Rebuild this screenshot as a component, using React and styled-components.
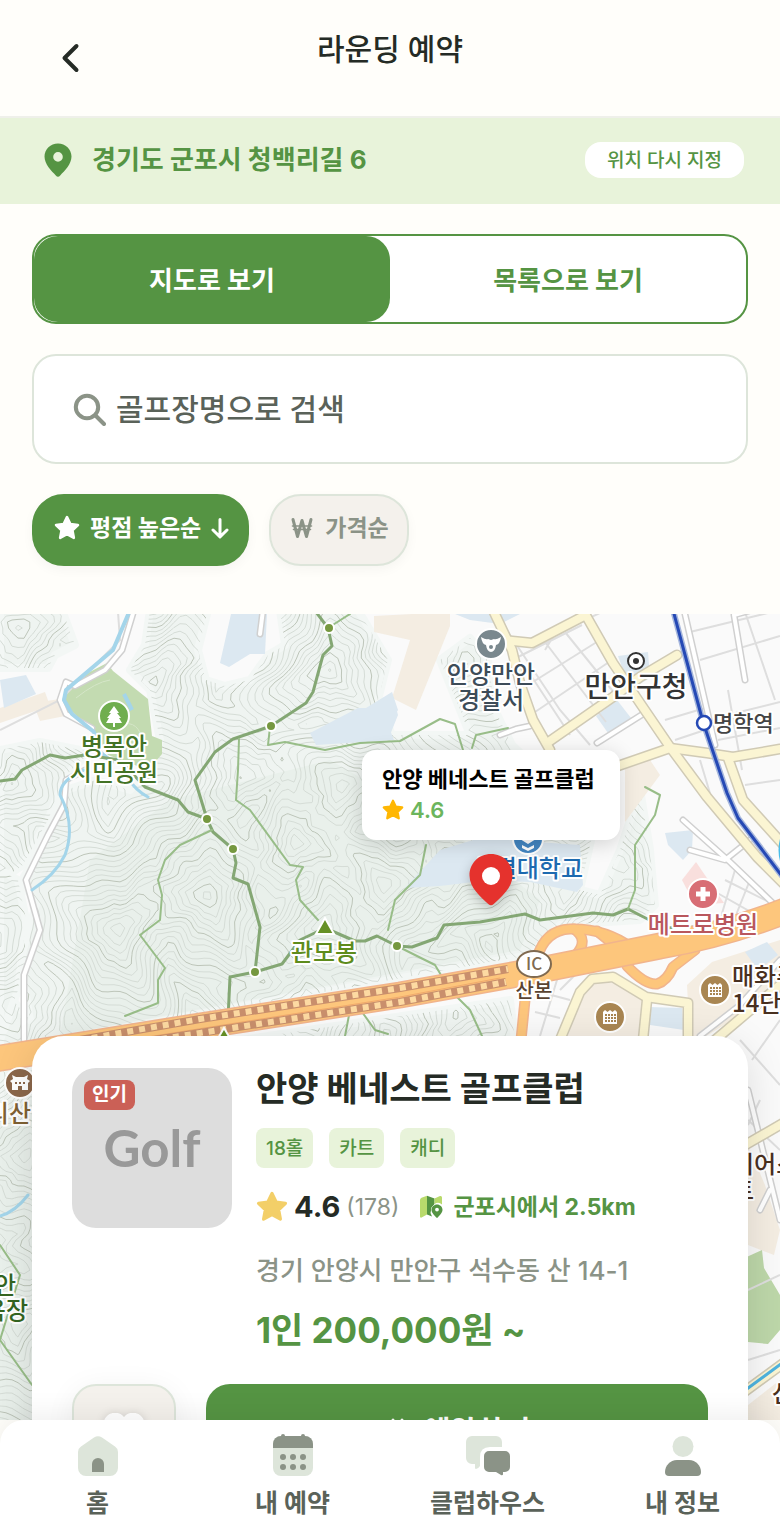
import React from 'react';
import styled, { createGlobalStyle, css } from 'styled-components';

const color = {
  page: '#fffefa',
  green: '#559443',
  mint: '#e8f3da',
  line: '#dde5da',
  sand: '#f4f1ec',
  ink: '#252b25',
  slate: '#5a6259',
  sage: '#8b9387',
};

const GlobalStyle = createGlobalStyle`
  *, *::before, *::after { box-sizing: border-box; }
  body { margin: 0; background: ${color.page}; }
  body, button, input {
    font-family: Inter, "Noto Sans CJK KR", sans-serif;
    color: ${color.ink};
  }
  button { border: 0; background: none; padding: 0; cursor: pointer; }
  p, h1, h2, ul { margin: 0; padding: 0; }
  svg { display: block; flex: none; }
`;

const Screen = styled.div`
  display: flex;
  flex-direction: column;
  height: 100vh;
  min-height: 900px;
  overflow: hidden;
`;

/* ---------- header ---------- */

const Header = styled.header`
  display: grid;
  grid-template-columns: 1fr auto 1fr;
  height: 118px;
  flex: none;
  padding: 0 32px;
  border-bottom: 2px solid #eff0ea;
`;

const BackButton = styled.button`
  display: grid;
  place-items: center;
  width: 76px;
  height: 116px;
`;

const PageTitle = styled.h1`
  padding-top: 26px;
  font-size: 30px;
  line-height: 46px;
  font-weight: 500;
`;

const LocationBar = styled.div`
  display: flex;
  align-items: center;
  flex: none;
  height: 86px;
  padding: 0 36px 2px 44px;
  background: ${color.mint};
`;

const LocationText = styled.p`
  flex: 1;
  margin-left: 20px;
  font-size: 26px;
  line-height: 42px;
  font-weight: 700;
  color: ${color.green};
`;

const RelocateButton = styled.button`
  height: 36px;
  padding: 0 22px;
  border-radius: 16px;
  background: #fff;
  color: ${color.green};
  font-size: 19px;
  line-height: 38px;
  font-weight: 500;
`;

/* ---------- controls ---------- */

const Controls = styled.section`
  display: flex;
  flex-direction: column;
  flex: none;
  gap: 30px;
  padding: 30px 32px 48px;
`;

const ViewSwitch = styled.div`
  display: flex;
  height: 90px;
  border: 2px solid ${color.green};
  border-radius: 24px;
  background: #fff;
`;

const ViewButton = styled.button`
  flex: 1;
  padding-top: 4px;
  border-radius: 24px;
  font-size: 26px;
  line-height: 40px;
  font-weight: 700;
  color: ${(p) => (p.$on ? '#fff' : color.green)};
  background: ${(p) => (p.$on ? color.green : 'transparent')};
`;

const SearchBox = styled.label`
  display: flex;
  align-items: center;
  gap: 10px;
  height: 110px;
  padding: 0 38px;
  border: 2px solid ${color.line};
  border-radius: 24px;
  background: #fff;
`;

const SearchInput = styled.input`
  flex: 1;
  min-width: 0;
  height: 60px;
  padding: 0;
  border: 0;
  outline: 0;
  background: none;
  font-size: 30px;
  font-weight: 500;
  &::placeholder { color: ${color.slate}; opacity: 1; }
`;

const ChipRow = styled.div`
  display: flex;
  gap: 20px;
`;

const Chip = styled.button`
  display: flex;
  align-items: center;
  gap: 10px;
  height: 72px;
  padding: 0 18px 4px 20px;
  border: 2px solid ${(p) => (p.$on ? color.green : color.line)};
  border-radius: 32px;
  font-size: 23px;
  line-height: 32px;
  font-weight: 700;
  box-shadow: 0 4px 12px rgba(0, 0, 0, 0.04);
  ${(p) => p.$on
    ? css`background: ${color.green}; color: #fff;`
    : css`background: ${color.sand}; color: ${color.sage};`}
`;

/* ---------- map ---------- */

const MapArea = styled.main`
  position: relative;
  flex: 1;
  min-height: 0;
  overflow: hidden;
  background: #fafafa;
`;

const MapDrawing = styled.svg`
  width: 100%;
  height: 100%;
`;

const Marker = styled.div`
  position: absolute;
  top: 136px;
  left: calc(50% + 101px);
  display: flex;
  flex-direction: column;
  align-items: center;
  gap: 14px;
  width: 258px;
  margin-left: -129px;
`;

const Popup = styled.div`
  width: 100%;
  height: 90px;
  padding: 12px 0 0 20px;
  border-radius: 14px;
  background: #fff;
  box-shadow: 0 4px 20px rgba(0, 0, 0, 0.16);
  white-space: nowrap;
`;

const PopupTitle = styled.p`
  font-size: 22px;
  line-height: 34px;
  font-weight: 700;
  color: #000;
`;

const PopupScore = styled.p`
  display: flex;
  align-items: center;
  gap: 6px;
  font-size: 22px;
  line-height: 28px;
  font-weight: 600;
  color: #6cb55d;
`;

/* ---------- course card ---------- */

const Card = styled.article`
  position: absolute;
  top: 422px;
  left: 32px;
  right: 32px;
  padding: 32px 40px;
  border-radius: 32px;
  background: #fff;
  box-shadow: 0 8px 40px rgba(0, 0, 0, 0.12);
`;

const CardBody = styled.div`
  display: flex;
  gap: 24px;
`;

const Thumb = styled.div`
  position: relative;
  display: grid;
  place-items: center;
  flex: none;
  width: 160px;
  height: 160px;
  border-radius: 24px;
  background: #ddd;
  color: #999;
  font-family: Lato, sans-serif;
  font-size: 51px;
  line-height: 60px;
  font-weight: 700;
`;

const HotBadge = styled.span`
  position: absolute;
  top: 12px;
  left: 12px;
  height: 30px;
  padding: 0 8px;
  border-radius: 8px;
  background: #cb6056;
  color: #fff;
  font-family: Inter, "Noto Sans CJK KR", sans-serif;
  font-size: 19px;
  line-height: 30px;
  font-weight: 700;
`;

const Info = styled.div`
  flex: 1;
  min-width: 0;
`;

const CourseName = styled.h2`
  font-size: 34px;
  line-height: 42px;
  font-weight: 700;
`;

const TagRow = styled.ul`
  display: flex;
  gap: 16px;
  margin-top: 18px;
  list-style: none;
`;

const Tag = styled.li`
  height: 40px;
  padding: 0 10px;
  border-radius: 8px;
  background: ${color.mint};
  color: ${color.green};
  font-size: 19px;
  line-height: 42px;
  font-weight: 500;
`;

const ScoreRow = styled.div`
  display: flex;
  align-items: center;
  height: 34px;
  margin-top: 22px;
  line-height: 34px;
`;

const Score = styled.strong`
  margin: 0 6px;
  font-size: 29px;
  font-weight: 700;
`;

const Reviews = styled.span`
  margin-right: 20px;
  font-size: 23px;
  color: ${color.sage};
`;

const Distance = styled.span`
  margin-left: 10px;
  font-size: 23px;
  font-weight: 700;
  color: ${color.green};
`;

const Address = styled.p`
  margin-top: 28px;
  font-size: 26px;
  line-height: 38px;
  font-weight: 500;
  color: ${color.sage};
`;

const Price = styled.p`
  margin-top: 18px;
  font-size: 35px;
  line-height: 44px;
  font-weight: 700;
  color: ${color.green};
`;

const Actions = styled.div`
  display: flex;
  gap: 30px;
  margin-top: 32px;
`;

const LikeButton = styled.button`
  display: grid;
  place-items: center;
  flex: none;
  width: 104px;
  height: 96px;
  border: 2px solid ${color.line};
  border-radius: 24px;
  background: ${color.sand};
  box-shadow: 0 4px 30px rgba(0, 0, 0, 0.06);
`;

const BookButton = styled.button`
  display: flex;
  align-items: center;
  justify-content: center;
  gap: 12px;
  flex: 1;
  height: 96px;
  border-radius: 24px;
  background: ${color.green};
  color: #fff;
  font-size: 29px;
  line-height: 40px;
  font-weight: 700;
`;

/* ---------- tab bar ---------- */

const TabBar = styled.nav`
  position: relative;
  display: grid;
  grid-template-columns: repeat(4, 1fr);
  flex: none;
  height: 112px;
  border-radius: 24px 24px 0 0;
  background: #fff;
  box-shadow: 0 -4px 30px rgba(0, 0, 0, 0.07);
`;

const Tab = styled.a`
  display: flex;
  flex-direction: column;
  align-items: center;
  gap: 8px;
  padding-top: 16px;
  color: ${color.slate};
  font-size: 25px;
  line-height: 38px;
  font-weight: 700;
  text-decoration: none;
`;

/* ---------- icons ---------- */

function Star({ size, fill }) {
  return (
    <svg width={size} height={size} viewBox="0 0 24 24" fill={fill} stroke={fill} strokeWidth="2.4" strokeLinejoin="round">
      <path d="M12 1.9l3.1 6.4 7 .9-5.1 4.9 1.3 7-6.3-3.4-6.3 3.4 1.3-7L1.9 9.2l7-.9z" />
    </svg>
  );
}

const BackIcon = () => (
  <svg width="20" height="30" viewBox="0 0 20 30" fill="none" stroke={color.ink} strokeWidth="4" strokeLinecap="round" strokeLinejoin="round">
    <path d="M16.500 3 4.500 15l12 12" />
  </svg>
);

const PinIcon = () => (
  <svg width="28" height="34" viewBox="0 0 28 34" fill={color.green} fillRule="evenodd">
    <path d="M14 .5C6.500.5.5 6.300.5 13.600c0 7.800 7 14.400 11.300 18.900a3 3 0 0 0 4.400 0C20.500 28 27.500 21.400 27.500 13.600 27.500 6.300 21.500.5 14 .5zm0 18.200a4.800 4.800 0 1 1 0-9.600 4.800 4.800 0 0 1 0 9.600z" />
  </svg>
);

const SearchIcon = () => (
  <svg width="34" height="34" viewBox="0 0 34 34" fill="none" stroke={color.sage} strokeWidth="4" strokeLinecap="round">
    <circle cx="15" cy="15" r="11.200" />
    <path d="M23.500 23.500l8.500 8.500" />
  </svg>
);

const ArrowDown = () => (
  <svg width="18" height="22" viewBox="1 0 18 22" fill="none" stroke="#fff" strokeWidth="3" strokeLinecap="round" strokeLinejoin="round">
    <path d="M10 2.500v17M3 13l7 6.800 7-6.800" />
  </svg>
);

const WonIcon = () => (
  <svg width="24" height="22" viewBox="1 0 24 22" fill="none" stroke={color.sage} strokeWidth="3" strokeLinecap="round" strokeLinejoin="round">
    <path d="M3 2.500 7.500 19.500 12 3.500l4.500 16L21 2.500" />
    <path d="M2.500 9h19M3.500 12.500h17" strokeWidth="1.600" />
  </svg>
);

const MapIcon = () => (
  <svg width="24" height="24" viewBox="0 0 24 24">
    <path d="M1 5q0-1.500 1.500-2.200L8 .8v18.800L2.600 22.500Q1 23 1 21.500z" fill="#b9da6c" />
    <path d="M8 .8 15.500 3.500V9l-3 4-1 5 1.500 3.500L8 19.600z" fill={color.green} />
    <path d="M15.500 3.500 21 1q2-.5 2 1.500v7q-3.500-3-7.500-.5z" fill="#b9da6c" />
    <path fillRule="evenodd" d="M18 9.500c-3 0-5.500 2.300-5.500 5.200 0 3.300 3.200 5.600 4.500 7.500q1 1 2 0c1.300-1.900 4.500-4.200 4.500-7.500 0-2.900-2.500-5.200-5.500-5.200zm0 7a1.900 1.900 0 1 1 0-3.800 1.900 1.900 0 0 1 0 3.800z" fill={color.green} stroke="#fff" strokeWidth="1" paintOrder="stroke" />
  </svg>
);

const HomeIcon = () => (
  <svg width="40" height="40" viewBox="0 0 40 40">
    <path d="M16 1.600a7 7 0 0 1 8 0L37 10.600q3 2.100 3 5.400v16a8 8 0 0 1-8 8H8a8 8 0 0 1-8-8V16q0-3.300 3-5.400z" fill={color.line} />
    <path d="M14 28a6 6 0 0 1 12 0v8H14z" fill={color.sage} />
  </svg>
);

const CalendarIcon = () => (
  <svg width="40" height="40" viewBox="0 0 40 40" overflow="visible">
    <rect width="40" height="40" rx="8" fill={color.line} />
    <g fill={color.sage}>
      <path d="M0 12V8a8 8 0 0 1 8-8h24a8 8 0 0 1 8 8v4z" />
      <circle cx="10" cy="0" r="2" />
      <circle cx="30" cy="0" r="2" />
      {[21, 31].map((y) => [10, 20, 30].map((x) => <circle key={`${x}-${y}`} cx={x} cy={y} r="3" />))}
    </g>
  </svg>
);

const ChatIcon = () => (
  <svg width="44" height="40" viewBox="0 0 44 40">
    <path d="M6 0h24a6 6 0 0 1 6 6v5H24q-10 0-10 10v9q-2 3-4 3-1 0-1-1.500V28H6a6 6 0 0 1-6-6V6a6 6 0 0 1 6-6z" fill={color.line} />
    <path d="M23 15h16a5 5 0 0 1 5 5v11a5 5 0 0 1-5 5h-2v2.600q-.5 1-2 .4L30 36h-7a5 5 0 0 1-5-5V20a5 5 0 0 1 5-5z" fill={color.sage} />
  </svg>
);

const PersonIcon = () => (
  <svg width="40" height="40" viewBox="0 0 40 40">
    <circle cx="20" cy="10.500" r="10.500" fill={color.line} />
    <path d="M14 24h12c7 0 12 6 12 12q0 4-4 4H6q-4 0-4-4c0-6 5-12 12-12z" fill={color.sage} />
  </svg>
);

const MarkerPin = () => (
  <svg width="44" height="52" viewBox="0 0 44 52" style={{ filter: 'drop-shadow(0 4px 6px rgba(0,0,0,.22))' }}>
    <path d="M22 0C9.600 0 .5 9.400.5 21.500.5 34 12 43 19.500 50.200q2.500 2.300 5 0C32 43 43.500 34 43.500 21.500 43.500 9.400 34.400 0 22 0z" fill="#e5322d" />
    <circle cx="22" cy="22" r="9" fill="#fff" />
  </svg>
);

/* ---------- terrain ---------- */

const peaks = [
  [15, 632, 190], [157, 682, 215], [240, 640, 120], [330, 676, 225], [465, 668, 190], [240, 770, 215],
  [340, 790, 235], [120, 925, 240], [202, 898, 250], [325, 930, 245], [300, 845, 235], [450, 860, 220],
  [560, 890, 200], [6, 1008, 200], [20, 1160, 240], [0, 870, 190], [10, 785, 200], [450, 1020, 215],
  [380, 880, 235], [20, 1330, 230], [300, 1010, 230], [620, 870, 170], [60, 1240, 210],
];

function elevation(x, y) {
  const wx = x + 5 * Math.sin(y / 21) + 1.5 * Math.sin((x + y) / 9);
  const wy = y + 5 * Math.sin(x / 23) + 1.5 * Math.sin((x - y) / 10);
  let best = -999;
  peaks.forEach(([px, py, h], i) => {
    const dx = wx - px;
    const dy = wy - py;
    const a = Math.atan2(dy, dx);
    const stretch = 1 + 0.2 * Math.sin(3 * a + i) + 0.09 * Math.sin(8 * a + i * 2);
    best = Math.max(best, h - Math.sqrt(dx * dx + dy * dy) * stretch);
  });
  return best;
}

function traceContours() {
  const cell = 6;
  const interval = 6;
  const out = { minor: '', major: '' };
  const cols = 114;
  const rows = 136;
  const grid = [];
  for (let r = 0; r <= rows; r += 1) {
    grid.push([]);
    for (let c = 0; c <= cols; c += 1) grid[r].push(elevation(c * cell, 610 + r * cell));
  }
  for (let r = 0; r < rows; r += 1) {
    for (let c = 0; c < cols; c += 1) {
      const v = [grid[r][c], grid[r][c + 1], grid[r + 1][c + 1], grid[r + 1][c]];
      const corner = [[0, 0], [1, 0], [1, 1], [0, 1]];
      const lo = Math.ceil(Math.min(...v) / interval);
      const hi = Math.floor(Math.max(...v) / interval);
      for (let n = lo; n <= hi; n += 1) {
        const level = n * interval;
        const hits = [];
        for (let k = 0; k < 4; k += 1) {
          const a = v[k];
          const b = v[(k + 1) % 4];
          if (a < level !== b < level) {
            const t = (level - a) / (b - a);
            const p = corner[k];
            const q = corner[(k + 1) % 4];
            hits.push([(c + p[0] + (q[0] - p[0]) * t) * cell, 610 + (r + p[1] + (q[1] - p[1]) * t) * cell]);
          }
        }
        const key = n % 5 === 0 ? 'major' : 'minor';
        for (let k = 0; k + 1 < hits.length; k += 2) {
          out[key] += `M${hits[k].map((m) => m.toFixed(1)).join(' ')}L${hits[k + 1].map((m) => m.toFixed(1)).join(' ')}`;
        }
      }
    }
  }
  return out;
}

const contours = traceContours();

const hills = [
  'M0 610H62L75 645 55 655 48 668 0 668z',
  'M150 610H208L198 650 206 680 225 686 250 680 268 655 285 645 280 610H358L376 640 388 660 378 700 392 735 470 735 452 690 440 660 470 638 488 660 495 710 512 745 560 790 600 800 580 890 600 895 620 850 640 790 650 850 655 905 640 920 560 925 530 955 0 1050V985L30 1020 20 960 36 905 22 880 46 840 66 790 96 780 130 790 150 770 160 740 150 690 130 670 145 645z',
  'M0 750L40 742 90 752 66 775 48 820 22 866 0 880z',
  'M0 870L18 880 26 920 18 990 0 1040z',
  'M0 1072L200 1046 510 1000 515 1040 500 1420H0z',
];

/* All outlines go down before any fill, so that crossings stay open. */
function Roads({ list, width = 8, fill = '#fbf5d3', edge = '#d0cab5' }) {
  return (
    <>
      {list.map((d) => <path key={`edge ${d}`} d={d} stroke={edge} strokeWidth={width + 3} />)}
      {list.map((d) => <path key={`fill ${d}`} d={d} stroke={fill} strokeWidth={width} />)}
    </>
  );
}

const MapLabel = styled.text`
  font-family: "Noto Sans CJK KR", sans-serif;
  font-size: ${(p) => p.$size || 24}px;
  font-weight: 500;
  fill: ${(p) => p.$fill};
  stroke: #fff;
  stroke-width: 4px;
  stroke-linejoin: round;
  paint-order: stroke;
  text-anchor: ${(p) => p.$anchor || 'middle'};
`;

const Building = ({ x, y }) => (
  <g>
    <circle cx={x} cy={y} r="15" fill="#a98652" stroke="#fff" strokeWidth="2" />
    <path d={`M${x - 7} ${y + 7}v-12l2-2 2.500 2 2.500-2 2.500 2 2.500-2 2 2v12z`} fill="#fff" />
    {[-3, 0, 3].map((dy) => [-5, -2, 1, 4].map((dx) => (
      <rect key={`${dx}${dy}`} x={x + dx} y={y + dy} width="2" height="2" fill="#a98652" />
    )))}
  </g>
);

const highway = 'M-5 1059L200 1026 400 995 540 970 660 946Q725 935 790 909';

function CourseMap() {
  return (
    <MapDrawing viewBox="0 614 780 806" preserveAspectRatio="xMidYMin slice" role="img" aria-label="지도">
      <defs>
        <clipPath id="hills">{hills.map((d) => <path key={d} d={d} />)}</clipPath>
      </defs>
      <rect y="610" width="780" height="812" fill="#fafafa" />

      <g fill="#eff4f1" stroke="#f3f7f5" strokeWidth="8" strokeLinejoin="round">
        {hills.map((d) => <path key={d} d={d} />)}
      </g>
      <g clipPath="url(#hills)" fill="none">
        <path d="M170 800L330 760 450 830 540 900 520 950 60 1035 90 860zM0 1100H60V1420H0z" fill="#e9f0eb" />
        <path d={contours.minor} stroke="#d5dcd6" strokeWidth="1" />
        <path d={contours.major} stroke="#bdc5b9" strokeWidth="1" />
      </g>

      {/* built-up blocks and water */}
      <g fill="#f4ede2">
        <path d="M0 708L45 692 50 706 0 723z" />
        <path d="M33 703L60 699 65 716 40 721z" />
        <path d="M374 616L450 612 450 626 416 710 392 698 410 640 374 632z" />
        <path d="M625 765L650 760 660 775 625 822z" />
        <path d="M585 990L600 980 640 990 646 1010 640 1040 565 1040z" />
        <path d="M687 985L712 962 780 940V990L700 1040H690z" />
        <path d="M748 1145L765 1185 780 1230 774 1255 748 1245z" />
        <path d="M748 1405L780 1380V1422H748z" />
      </g>
      <g fill="#dce8f1">
        <path d="M231 614H267L265 654 250 654 229 667 220 663z" />
        <path d="M0 680L26 675 36 694 4 708z" />
        <path d="M310 733L358 708 366 708 392 692 398 710 388 725 394 740 316 745z" />
        <path d="M380 700L392 693 398 715 388 740H380z" />
        <path d="M455 614H520L500 624 470 620z" />
        <path d="M618 656L648 652 650 678 630 690z" />
        <path d="M596 716L617 700 631 718 608 733z" />
        <path d="M405 888L440 850 480 838 580 845 583 885 577 892 530 882 490 880 440 886z" />
        <path d="M665 833L693 830 692 850 683 860 668 845z" />
        <path d="M745 952L767 942 778 955 758 970z" />
        <path d="M650 1007L682 1008 684 1030 650 1025z" />
      </g>
      <path d="M682 880L696 862 724 903 695 905z" fill="#f9dfdd" />
      <path d="M64 690L80 677 107 663 113 671 148 699 152 736 162 740V754L148 770 108 755 92 730 66 706z" fill="#c3dbb1" />
      <path d="M70 690Q90 672 105 672M76 698Q96 682 110 680M120 724Q140 720 142 742" stroke="#d5e6c8" fill="none" />
      <path d="M124 694L132 710" stroke="#a4d5ea" strokeWidth="4" />
      <path d="M740 1260L762 1250 764 1268 780 1295V1330L768 1344 748 1342z" fill="#bdd7a9" />

      {/* small streets */}
      <g fill="none" stroke="#dedede" strokeWidth="2">
        <path d="M508 632L560 710 590 745M524 665L570 735M545 642L606 722M565 632L620 700M512 660L582 625M520 690L600 640M535 712L612 660M545 650L560 625M585 620L602 612" />
        <path d="M690 632L780 610M700 660L780 636M715 718L780 702M718 740L780 728M745 612L775 700M728 690L742 770M665 720L705 708M675 740L705 730M700 760L712 800M745 785L780 780" />
        <path d="M0 730L60 700 120 640 118 612M560 970L540 1036M575 975L560 990M540 992L570 1000M535 1012L560 1018M735 870L720 920M750 880L730 930M712 890L765 920M725 880L775 905" />
        <path d="M740 1040L780 1085M748 1120L780 1150M752 1060L780 1020M760 1100L748 1125M748 1290L780 1275M748 1360L780 1350" />
      </g>
      <g strokeLinejoin="round" strokeLinecap="round" fill="none">
        <Roads
          width={4}
          fill="#fff"
          edge="#d0d0d0"
          list={[
            'M134 610L122 650 105 670 75 686 66 682 60 700 66 714 92 728',
            'M263 610L260 634',
            'M85 770L66 780 64 805 48 835 26 880 40 930 24 975 24 1040',
            'M684 610L715 745',
            'M752 610L734 615 745 680',
            'M530 726L516 729 500 735',
            'M597 743L643 714',
            'M683 820L730 862 780 910',
            'M690 850L725 860 750 840',
            'M700 1036L740 1005 780 960',
            'M748 1090L780 1220',
            'M760 1210L770 1190',
          ]}
        />

        <path d="M130 610L113 650 66 690 64 700 72 714 94 732 100 752 112 762" stroke="#a4d5ea" strokeWidth="4" />
        <path d="M84 770Q60 780 60 795Q76 825 65 855Q55 875 32 890M0 1216Q15 1212 28 1195M130 780Q135 790 148 797" stroke="#a4d5ea" strokeWidth="3" />

        {/* hiking trails */}
        <path d="M316 612L328 628 332 646 323 655 313 692 306 703 271 726 233 739 215 752 195 780 207 819 213 832 233 849 236 863 233 878 248 884 260 927 255 972 230 977 228 1019 222 1034M0 781L15 779 22 770 50 755 65 758 85 755 120 760 145 787 178 800 188 812 207 819M255 972L282 964 300 940 325 928 355 941 365 941 377 936 397 946 412 947 437 938 444 925 480 922 525 914 540 920 593 913 613 915 628 909 665 928 730 926" stroke="#84a774" strokeWidth="3" />
        <path d="M328 628L350 614M270 727L268 745 285 742 325 750 360 743 400 741 440 719 455 724 463 750M472 748L476 735 508 728M239 739L238 770 236 800 250 810 290 865 303 867 296 880 300 900 318 920M212 830L180 845 165 860 158 880 162 895 160 920 140 935 165 968 158 980 158 1003 125 1016M426 845L420 875 395 900 388 930M645 787L660 795 655 815 635 845 635 890 628 909M397 946L435 965 450 990 470 1010 482 1036M345 1036L350 1010 362 1012 375 1030 388 1034M0 1245L20 1275 0 1340 32 1385" stroke="#98bd88" strokeWidth="2" />

        {/* main roads */}
        <Roads
          list={[
            'M493 610L512 650 520 683 533 720 550 750',
            'M503 640L532 643 582 617',
            'M547 743L613 697 640 677 677 655',
            'M580 605L613 663 640 703 670 747 707 797 757 857 790 890',
            'M615 767L670 748 707 753 733 757 780 749',
            'M728 758L743 800 790 852',
            'M560 1040L580 992 592 979 613 977 646 997 688 1003V1040',
            'M647 1000L643 1040',
            'M715 1040L780 985',
            'M740 1148L785 1122',
            'M740 1395L785 1362',
          ]}
        />
        <path d="M740 1394L785 1361" stroke="#4db3df" strokeWidth="3" />

        {/* expressway and its ramps */}
        <Roads
          fill="#fdc67c"
          edge="#f1b48c"
          list={[
            'M537 958Q545 930 570 929Q605 928 632 948L680 945',
            'M574 929Q590 940 575 956',
            'M597 931L618 948',
            'M627 966Q645 985 657 984Q667 981 673 967L695 950',
            'M527 980L521 1040',
          ]}
        />
        <Roads list={[highway]} width={24} fill="#fdc67c" edge="#f1b48c" />
        <path d="M110 1043L400 997 500 978" stroke="#f1a96c" strokeWidth="1" />
        {['M80 1040L200 1019 400 988 508 969', 'M90 1050L200 1033 400 1002 506 982'].map((d) => (
          <g key={d} strokeLinecap="butt">
            <path d={d} stroke="#c98f6c" strokeWidth="8" />
            <path d={d} stroke="#fddaa2" strokeWidth="6" strokeDasharray="6 6" />
          </g>
        ))}

        {/* railway */}
        <path d="M673 610L703 722 727 793 738 818 785 880" stroke="#a5b6dc" strokeWidth="6" />
        <path d="M673 610L703 722 727 793 738 818 785 880" stroke="#2549b5" strokeWidth="3" />
        <path d="M784 832Q776 850 784 868" stroke="#48bdea" strokeWidth="3" />
      </g>

      <g fill="#769840" stroke="#fff" strokeWidth="2">
        {[[329, 628], [271, 726], [207, 819], [233, 849], [255, 972], [397, 946]].map(([x, y]) => (
          <circle key={x} cx={x} cy={y} r="5" />
        ))}
        <path d="M325 918l9 16h-18zM224 1028l7 12h-14z" fill="#669126" />
      </g>
      <circle cx="704" cy="723" r="7" fill="#fff" stroke="#2549b5" strokeWidth="2.500" />
      <circle cx="636" cy="661" r="8" fill="#fff" stroke="#333" strokeWidth="2" />
      <circle cx="636" cy="661" r="3" fill="#333" />

      <g stroke="#fff" strokeWidth="2">
        <circle cx="114" cy="716" r="15" fill="#70ae4f" />
        <circle cx="491" cy="644" r="15" fill="#7a888e" />
        <circle cx="528" cy="839" r="15" fill="#4386c2" />
        <circle cx="703" cy="894" r="15" fill="#d86e75" />
        <circle cx="20" cy="1083" r="15" fill="#8b674b" />
      </g>
      <g fill="#fff">
        <path d="M114 706l5 7h-2l4 5h-2l3 5h-7v4h-2v-4h-7l3-5h-2l4-5h-2z" />
        <path d="M481 637q5 3 7 2l3 1 3-1q2 1 7-2-1 7-5 8-1 7-5 7t-5-7q-4-1-5-8z" />
        <circle cx="491" cy="647" r="2" fill="#7a888e" />
        <path d="M520 839l8-3 8 3-8 5zM522 845l6 3 6-3v3l-6 3-6-3z" />
        <path d="M700.500 887h5v4.500h4.500v5h-4.500v4.500h-5v-4.500H696v-5h4.500z" />
        <path d="M10 1081l3-2-1-4 4 2h8l4-2-1 4 3 2-2 2v7H12v-7z" />
        <path d="M18 1086h4v4h-4zM15 1082h2v2h-2zM19 1082h2v2h-2zM23 1082h2v2h-2z" fill="#8b674b" />
      </g>
      <Building x={715} y={990} />
      <Building x={610} y={1017} />
      <ellipse cx="534" cy="964" rx="17" ry="13" fill="#fff" stroke="#806a50" strokeWidth="2" />
      <MapLabel x="534" y="970" $size={17} $fill="#806a50">IC</MapLabel>

      <MapLabel x="114" y="755" $fill="#447326">병목안</MapLabel>
      <MapLabel x="114" y="781" $fill="#447326">시민공원</MapLabel>
      <MapLabel x="491" y="683" $fill="#3d4c58">안양만안</MapLabel>
      <MapLabel x="491" y="709" $fill="#3d4c58">경찰서</MapLabel>
      <MapLabel x="636" y="697" $size={28} $fill="#333">만안구청</MapLabel>
      <MapLabel x="713" y="731" $size={22} $anchor="start" $fill="#444">명학역</MapLabel>
      <MapLabel x="583" y="877" $anchor="end" $fill="#1d6ab0">성결대학교</MapLabel>
      <MapLabel x="703" y="933" $fill="#b9575d">메트로병원</MapLabel>
      <MapLabel x="324" y="961" $fill="#5e8c1c">관모봉</MapLabel>
      <MapLabel x="534" y="998" $size={20} $fill="#594331">산본</MapLabel>
      <MapLabel x="732" y="985" $anchor="start" $fill="#49301f">매화주공</MapLabel>
      <MapLabel x="732" y="1012" $anchor="start" $fill="#49301f">14단지</MapLabel>
      <MapLabel x="31" y="1122" $anchor="end" $fill="#806133">수리산</MapLabel>
      <MapLabel x="16" y="1294" $anchor="end" $fill="#34651f">병목안</MapLabel>
      <MapLabel x="28" y="1319" $anchor="end" $fill="#34651f">산림욕장</MapLabel>
      <MapLabel x="732" y="1173" $anchor="start" $fill="#49301f">이어스</MapLabel>
      <MapLabel x="732" y="1199" $anchor="start" $fill="#49301f">트</MapLabel>
      <MapLabel x="772" y="1402" $anchor="start" $fill="#49301f">산본</MapLabel>
    </MapDrawing>
  );
}

const tabs = [
  ['홈', HomeIcon],
  ['내 예약', CalendarIcon],
  ['클럽하우스', ChatIcon],
  ['내 정보', PersonIcon],
];

export default function App() {
  return (
    <Screen>
      <GlobalStyle />
      <Header>
        <BackButton aria-label="뒤로"><BackIcon /></BackButton>
        <PageTitle>라운딩 예약</PageTitle>
      </Header>

      <LocationBar>
        <PinIcon />
        <LocationText>경기도 군포시 청백리길 6</LocationText>
        <RelocateButton>위치 다시 지정</RelocateButton>
      </LocationBar>

      <Controls>
        <ViewSwitch>
          <ViewButton $on aria-pressed="true">지도로 보기</ViewButton>
          <ViewButton aria-pressed="false">목록으로 보기</ViewButton>
        </ViewSwitch>
        <SearchBox>
          <SearchIcon />
          <SearchInput type="text" placeholder="골프장명으로 검색" aria-label="골프장명으로 검색" />
        </SearchBox>
        <ChipRow>
          <Chip $on><Star size={26} fill="#fff" />평점 높은순<ArrowDown /></Chip>
          <Chip><WonIcon />가격순</Chip>
        </ChipRow>
      </Controls>

      <MapArea>
        <CourseMap />
        <Marker>
          <Popup>
            <PopupTitle>안양 베네스트 골프클럽</PopupTitle>
            <PopupScore><Star size={22} fill="#ffb703" />4.6</PopupScore>
          </Popup>
          <MarkerPin />
        </Marker>

        <Card>
          <CardBody>
            <Thumb>
              Golf
              <HotBadge>인기</HotBadge>
            </Thumb>
            <Info>
              <CourseName>안양 베네스트 골프클럽</CourseName>
              <TagRow>
                <Tag>18홀</Tag>
                <Tag>카트</Tag>
                <Tag>캐디</Tag>
              </TagRow>
              <ScoreRow>
                <Star size={32} fill="#f3cf68" />
                <Score>4.6</Score>
                <Reviews>(178)</Reviews>
                <MapIcon />
                <Distance>군포시에서 2.5km</Distance>
              </ScoreRow>
              <Address>경기 안양시 만안구 석수동 산 14-1</Address>
              <Price>1인 200,000원 ~</Price>
            </Info>
          </CardBody>
          <Actions>
            <LikeButton aria-label="찜하기">
              <svg width="44" height="38" viewBox="0 0 44 38" fill="#fff" style={{ filter: 'drop-shadow(0 0 4px rgba(0,0,0,.12))' }}>
                <path d="M22 4C17-2 9-1 5 3-1 9 1 17 6 22l16 15 16-15c5-5 7-13 1-19-4-4-12-5-17 1z" />
              </svg>
            </LikeButton>
            <BookButton>
              <svg width="28" height="28" viewBox="0 0 28 28" fill="none" stroke="#fff" strokeWidth="3" strokeLinecap="round">
                <path d="M9 2v4M18 2v4M4 7h20v18H4zM4 13h20" />
              </svg>
              예약하기
            </BookButton>
          </Actions>
        </Card>
      </MapArea>

      <TabBar>
        {tabs.map(([label, Icon]) => (
          <Tab key={label} href="#">
            <Icon />
            {label}
          </Tab>
        ))}
      </TabBar>
    </Screen>
  );
}
